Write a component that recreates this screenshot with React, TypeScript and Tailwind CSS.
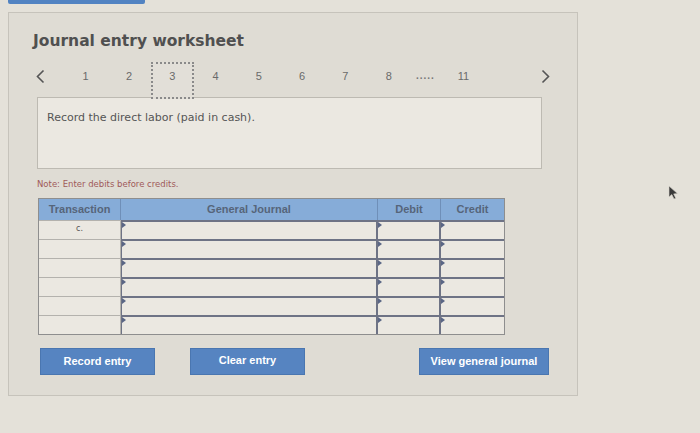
const pages = ['1', '2', '3', '4', '5', '6', '7', '8']

const rows = [0, 1, 2, 3, 4, 5]

function Marker() {
  return (
    <span className="absolute left-0 top-0 h-0 w-0 border-y-[3px] border-l-[4px] border-y-transparent border-l-[#5a6685]"></span>
  )
}

export default function App() {
  return (
    <div className="relative h-[433px] w-[700px] overflow-hidden bg-[#e4e1d9] font-['Liberation_Sans',Arial,sans-serif]">
      <div className="ml-[8px] h-[4px] w-[137px] rounded-b-[2px] bg-[#5283c2]"></div>

      <div className="ml-[8px] mt-[8px] h-[384px] w-[570px] border border-[#c6c3bb] bg-[#dfdcd4] pl-[24px] pt-[19px]">
        <h1 className="font-['DejaVu_Sans',Verdana,sans-serif] text-[15.5px] font-bold leading-[19px] text-[#505050]">
          Journal entry worksheet
        </h1>

        <div className="mt-[11px] flex h-[35px] items-start text-[11px] text-[#6a6a6a]">
          <div className="flex h-[35px] w-[31px] items-start pl-[3px] pt-[7px]">
            <svg width="9" height="15" viewBox="0 0 9 15">
              <polyline points="7.5,1.5 1.5,7.5 7.5,13.5" fill="none" stroke="#555" strokeWidth="1.6" />
            </svg>
          </div>
          {pages.map((p) =>
            p === '3' ? (
              <div
                key={p}
                className="relative z-10 h-[37px] w-[43.3px] border-2 border-dotted border-[#8a8a8a] bg-[#e2dfd8] pt-[5px] text-center leading-[14px]"
              >
                {p}
              </div>
            ) : (
              <div key={p} className="h-[35px] w-[43.3px] pt-[7px] text-center leading-[14px]">
                {p}
              </div>
            )
          )}
          <div className="h-[35px] w-[30px] pt-[7px] text-center text-[10px] font-bold leading-[14px] tracking-[1px] text-[#777]">
            .....
          </div>
          <div className="h-[35px] w-[46px] pt-[7px] text-center leading-[14px]">11</div>
          <div className="ml-[55px] flex h-[35px] items-start pt-[7px]">
            <svg width="9" height="15" viewBox="0 0 9 15">
              <polyline points="1.5,1.5 7.5,7.5 1.5,13.5" fill="none" stroke="#555" strokeWidth="1.6" />
            </svg>
          </div>
        </div>

        <div className="ml-[4px] h-[72px] w-[505px] border border-[#bdbab2] bg-[#ebe8e1] pl-[9px] pt-[13px] font-['DejaVu_Sans',Verdana,sans-serif] text-[11px] leading-[14px] text-[#555]">
          Record the direct labor (paid in cash).
        </div>

        <p className="ml-[4px] mt-[9px] font-['DejaVu_Sans',Verdana,sans-serif] text-[8.5px] leading-[12px] text-[#a05a5a]">
          Note: Enter debits before credits.
        </p>

        <div className="ml-[5px] mt-[8px] w-[467px] border border-[#8e8e8e]">
          <div className="grid h-[21px] grid-cols-[82px_257px_63px_63px] bg-[#86acd8] text-[11px] font-bold leading-[20px] text-[#56657a]">
            <div className="border-r border-[#6f8fb8] text-center">Transaction</div>
            <div className="border-r border-[#6f8fb8] text-center">General Journal</div>
            <div className="border-r border-[#6f8fb8] text-center">Debit</div>
            <div className="text-center">Credit</div>
          </div>
          {rows.map((r) => (
            <div key={r} className="grid h-[19px] grid-cols-[82px_257px_63px_63px] bg-[#ebe8e1]">
              <div className="border-t border-r border-[#b4b2ad] text-center font-['DejaVu_Sans',Verdana,sans-serif] text-[8px] leading-[16px] text-[#555]">
                {r === 0 ? 'c.' : ''}
              </div>
              <div className="relative border-t-2 border-l border-r-2 border-[#6e7385]">
                <Marker />
              </div>
              <div className="relative border-t-2 border-r-2 border-[#6e7385]">
                <Marker />
              </div>
              <div className="relative border-t-2 border-[#6e7385]">
                <Marker />
              </div>
            </div>
          ))}
        </div>

        <div className="mt-[13px] flex h-[27px] text-[11px] font-bold text-white">
          <button className="ml-[7px] h-[27px] w-[115px] border border-[#4a76b0] bg-[#5684c1]">Record entry</button>
          <button className="ml-[35px] h-[27px] w-[115px] border border-[#4a76b0] bg-[#5684c1] pb-[3px]">Clear entry</button>
          <button className="ml-[114px] h-[27px] w-[130px] border border-[#4a76b0] bg-[#5684c1]">View general journal</button>
        </div>
      </div>

      <svg className="absolute left-[668px] top-[185px]" width="12" height="15" viewBox="0 0 12 15">
        <path d="M1 1 L1 12 L3.8 9.6 L6 14 L7.8 13.2 L5.7 8.9 L9.5 8.6 Z" fill="#3a3a3a" stroke="#d8d5cd" strokeWidth="0.6" />
      </svg>
    </div>
  )
}
